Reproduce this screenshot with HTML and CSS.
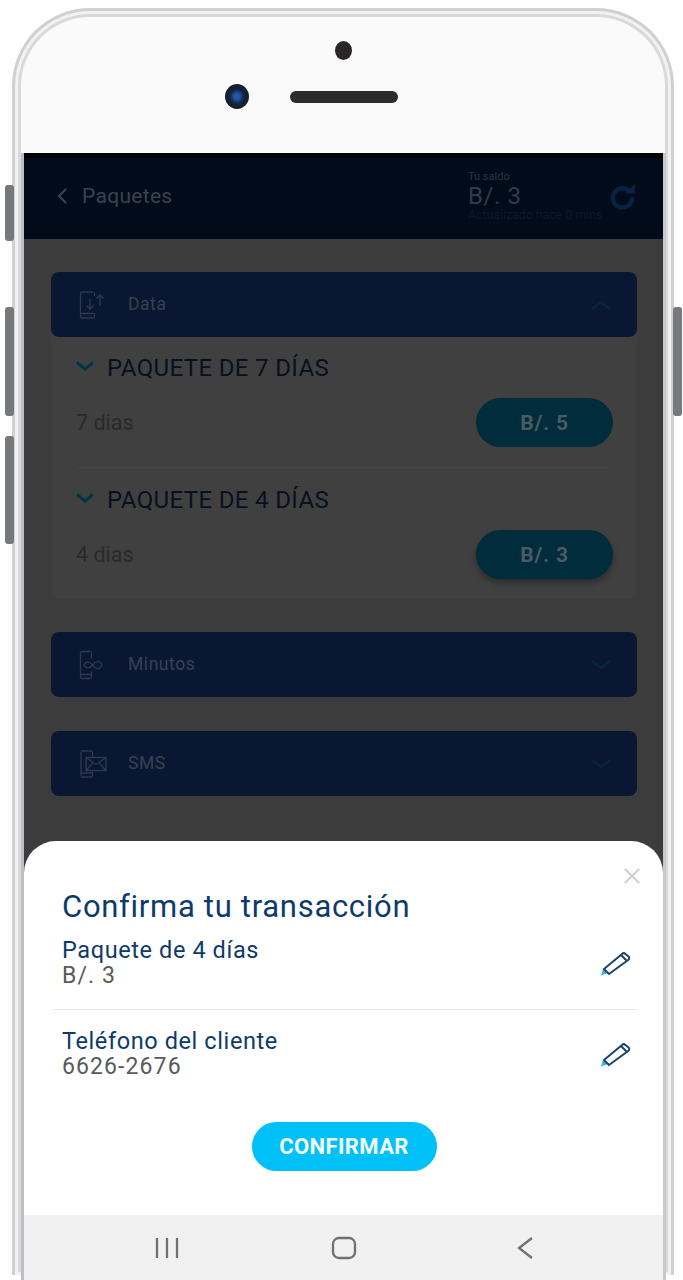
FILE: index.html
```html
<!DOCTYPE html>
<html lang="es">
<head>
<meta charset="utf-8">
<title>Paquetes</title>
<link rel="stylesheet" href="styles.css">
</head>
<body>
<div class="phone">
  <span class="side side-a"></span>
  <span class="side side-b"></span>
  <span class="side side-c"></span>
  <span class="side side-d"></span>
  <div class="frame">
    <div class="bezel">
      <span class="sensor"></span>
      <div class="bezel-row">
        <span class="lens"></span>
        <span class="speaker"></span>
      </div>
    </div>
    <div class="screen">
      <header class="topbar">
        <div class="back">
          <svg class="back-icon" viewBox="0 0 14 20"><path d="M11 3 4 10l7 7"/></svg>
          <span class="back-label">Paquetes</span>
        </div>
        <div class="balance">
          <div class="balance-cap">Tu saldo</div>
          <div class="balance-num">B/. 3</div>
          <div class="balance-note">Actualizado hace 0 mins</div>
        </div>
        <svg class="refresh" viewBox="0 0 30 30"><path d="M23 10.500A10 10 0 1 0 25 16"/><path class="fill" d="M17 12h11V2z"/></svg>
      </header>
      <main class="content">
        <section class="acc-open">
          <div class="acc-head">
            <svg class="acc-icon" viewBox="0 0 30 30"><path d="M14 2H3a1.500 1.500 0 0 0-1.500 1.500v23A1.500 1.500 0 0 0 3 28h11a1.500 1.500 0 0 0 1.500-1.500V24M1.500 23.500h14M15.500 6V2.800M11 9v10M7.500 15.500 11 19l3.500-3.500M21 16V5M17.500 8.500 21 5l3.500 3.500"/></svg>
            <span class="acc-label">Data</span>
            <svg class="acc-chev" viewBox="0 0 22 12"><path d="M2 10 11 3l9 7"/></svg>
          </div>
          <div class="acc-body">
            <div class="pack pack-first">
              <h2 class="pack-title"><svg class="pack-chev" viewBox="0 0 18 10"><path d="m1 1.500 8 6.500 8-6.500"/></svg>PAQUETE DE 7 DÍAS</h2>
              <div class="pack-row"><span class="pack-days">7 dias</span><span class="price">B/. 5</span></div>
            </div>
            <div class="pack pack-second">
              <h2 class="pack-title"><svg class="pack-chev" viewBox="0 0 18 10"><path d="m1 1.500 8 6.500 8-6.500"/></svg>PAQUETE DE 4 DÍAS</h2>
              <div class="pack-row"><span class="pack-days">4 dias</span><span class="price price-shadow">B/. 3</span></div>
            </div>
          </div>
        </section>
        <div class="acc-head acc-closed">
          <svg class="acc-icon" viewBox="0 0 30 30"><path d="M11 1.500H3A1.500 1.500 0 0 0 1.500 3v24A1.500 1.500 0 0 0 3 28.500h8A1.500 1.500 0 0 0 12.500 27v-6M12.500 9V3A1.500 1.500 0 0 0 11 1.500M1.500 24.500h11M5 15a4 3.500 0 0 1 7-1.500l3 3a4 3.500 0 1 0 0-3l-3 3A4 3.500 0 0 1 5 15z"/></svg>
          <span class="acc-label">Minutos</span>
          <svg class="acc-chev" viewBox="0 0 22 12"><path d="m2 2 9 7 9-7"/></svg>
        </div>
        <div class="acc-head acc-closed">
          <svg class="acc-icon" viewBox="0 0 30 30"><path d="M12 2H3.500A1.500 1.500 0 0 0 2 3.500v23A1.500 1.500 0 0 0 3.500 28H12a1.500 1.500 0 0 0 1.500-1.500V22M13.500 8V3.500A1.500 1.500 0 0 0 12 2M2 24h11.500M7 8.500h20v13H7zM7 8.500l10 7 10-7M7 21.500l7-8M27 21.500l-7-8"/></svg>
          <span class="acc-label">SMS</span>
          <svg class="acc-chev" viewBox="0 0 22 12"><path d="m2 2 9 7 9-7"/></svg>
        </div>
      </main>
      <section class="sheet">
        <svg class="close" viewBox="0 0 18 18"><path d="m2 2 14 14M16 2 2 16"/></svg>
        <h1 class="sheet-title">Confirma tu transacción</h1>
        <div class="line line-first">
          <div>
            <div class="line-label">Paquete de 4 días</div>
            <div class="line-value">B/. 3</div>
          </div>
          <svg class="pencil" viewBox="0 0 32 28"><path class="tip" d="M1 26.500 3 20l5 4z"/><path d="m4 20 18-15c1-1 2.500-1 3.500 0l3 2.500c1 1 1 2.300 0 3.200L9 25zM21 6l6 6"/></svg>
        </div>
        <div class="line line-second">
          <div>
            <div class="line-label">Teléfono del cliente</div>
            <div class="line-value">6626-2676</div>
          </div>
          <svg class="pencil" viewBox="0 0 32 28"><path class="tip" d="M1 26.500 3 20l5 4z"/><path d="m4 20 18-15c1-1 2.500-1 3.500 0l3 2.500c1 1 1 2.300 0 3.200L9 25zM21 6l6 6"/></svg>
        </div>
        <div class="confirm-wrap"><button class="confirm">CONFIRMAR</button></div>
      </section>
      <nav class="navbar">
        <svg class="nav-icon" viewBox="0 0 26 26"><path d="M3 3v20M13 3v20M23 3v20"/></svg>
        <svg class="nav-icon" viewBox="0 0 26 26"><rect x="2" y="3" width="22" height="20" rx="6"/></svg>
        <svg class="nav-icon" viewBox="0 0 26 26"><path d="M24 3 11 13l13 10"/></svg>
      </nav>
    </div>
  </div>
</div>
</body>
</html>
```
FILE: styles.css
```css
* { box-sizing: border-box; }
html, body { margin: 0; padding: 0; background: #fff; }
body { width: 683px; height: 1280px; overflow: hidden; font-family: Roboto, "Noto Sans", sans-serif; }

.phone { position: relative; width: 683px; height: 1280px; padding: 8px 9px 0 12px; }
.frame {
  height: 1267px;
  border: 3px solid #d0d0d0;
  border-bottom: 0;
  border-radius: 78px 78px 0 0;
  background: #fafafa;
  box-shadow: inset 0 0 0 3px #f2f2f2, inset 0 0 0 6px #d9d9d9;
  padding: 0 6px 0 9px;
}
.side { position: absolute; width: 9px; background: #77787c; border-radius: 3px; }
.side-a { left: 5px; top: 185px; height: 56px; }
.side-b { left: 5px; top: 307px; height: 109px; }
.side-c { left: 5px; top: 436px; height: 108px; }
.side-d { left: 673px; top: 307px; height: 109px; }

.bezel { height: 142px; display: flex; flex-direction: column; align-items: center; padding: 30px 0 0 0; }
.sensor { width: 17px; height: 19px; margin-left: -3px; border-radius: 50%; background: #2a2626; }
.bezel-row { display: flex; align-items: center; gap: 41px; margin-top: 24px; margin-left: -67px; }
.lens { width: 24px; height: 25px; border-radius: 50%; background: radial-gradient(circle at 50% 50%, #2457a8 0 14%, #12233f 42%, #181c24 72%, #4a5668 100%); display: block; }
.speaker { width: 108px; height: 12px; border-radius: 6px; background: #2c2c2e; }

.screen {
  width: 639px;
  background: #3c3c3c;
  height: 1127px;
  display: flex;
  flex-direction: column;
  box-shadow: -3px 0 0 #bcc0c4, 3px 0 0 #c8c8c8;
}
.topbar {
  height: 86px;
  flex: none;
  background: #010b1a;
  border-top: 5px solid #000;
  display: flex;
  align-items: center;
  padding: 0 20px 5px 31px;
  color: #3a424e;
}
.back { display: flex; align-items: center; gap: 13px; width: 413px; }
.back-icon { width: 14px; height: 20px; fill: none; stroke: #3a424e; stroke-width: 2.200; }
.back-label { font-size: 21px; letter-spacing: .3px; }
.balance { width: 142px; margin-top: -1px; }
.balance-cap { font-size: 11px; line-height: 14px; color: #2c333f; }
.balance-num { font-size: 24px; line-height: 24px; color: #343b47; letter-spacing: .6px; }
.balance-note { font-size: 12.300px; line-height: 14px; color: #101825; }
.refresh { width: 29px; height: 29px; margin-left: -2px; fill: none; stroke: #062345; stroke-width: 4.500; }
.refresh .fill { fill: #062345; stroke: none; }

.content { height: 602px; flex: none; padding: 33px 26px 0 27px; }
.acc-head {
  height: 65px;
  border-radius: 8px;
  background: #0a1733;
  display: flex;
  align-items: center;
  padding: 0 25px 0 28px;
}
.acc-icon { width: 30px; height: 30px; fill: none; stroke: #2d384e; stroke-width: 1.300; }
.acc-label { flex: 1; margin: -1px 0 0 19px; font-size: 17.500px; color: #3a4050; letter-spacing: .55px; }
.acc-chev { width: 22px; height: 12px; fill: none; stroke: #08263c; stroke-width: 2.500; }
.acc-open { border-radius: 8px; background: #404040; margin-bottom: 33px; height: 327px; }
.acc-closed { margin-bottom: 34px; }
.acc-body { padding: 0 24px 0 25px; }
.pack { padding-top: 17px; }
.pack-second { padding-top: 18px; }
.pack-first { height: 131px; border-bottom: 1px solid #454545; }
.pack-title { margin: 0; display: flex; align-items: center; font-size: 24px; line-height: 28px; font-weight: 400; color: #08101f; letter-spacing: .35px; }
.pack-chev { width: 18px; height: 10px; margin-right: 13px; margin-top: -4px; fill: none; stroke: #003644; stroke-width: 3; }
.pack-row { display: flex; align-items: center; justify-content: space-between; margin-top: 16px; }
.pack-days { font-size: 21.500px; color: #282a2c; }
.price { width: 137px; height: 49px; border-radius: 25px; background: #002c3b; color: #4c5a62; font-size: 21px; font-weight: 700; letter-spacing: .8px; display: flex; align-items: center; justify-content: center; }
.price-shadow { box-shadow: 0 4px 6px rgba(0,0,0,.3); }

.sheet {
  position: relative;
  height: 374px;
  flex: none;
  background: #fff;
  border-radius: 32px 32px 0 0;
  padding: 47px 26px 0 38px;
}
.close { position: absolute; right: 22px; top: 26px; width: 18px; height: 18px; fill: none; stroke: #cfcfcf; stroke-width: 2; }
.sheet-title { margin: 0; font-size: 31px; line-height: 38px; font-weight: 400; color: #0d3a6b; letter-spacing: .7px; }
.line { display: flex; justify-content: space-between; align-items: center; margin-left: -10px; padding-left: 10px; }
.line-first { padding-top: 12px; padding-bottom: 21px; border-bottom: 1px solid #e6e6e6; }
.line-second { padding-top: 19px; padding-bottom: 19px; }
.line-label { font-size: 23.500px; line-height: 25px; color: #0d3a6b; letter-spacing: .6px; }
.line-value { font-size: 23px; line-height: 25px; color: #5a5a5a; letter-spacing: 1.100px; }
.pencil { width: 32px; height: 28px; margin-right: 5px; fill: none; stroke: #1c4468; stroke-width: 2; }
.pencil .tip { fill: #3cb4dc; stroke: none; }
.confirm-wrap { display: flex; justify-content: center; padding-right: 11px; margin-top: 24px; }
.confirm { width: 185px; height: 49px; border: 0; border-radius: 25px; background: #00c1f7; color: #f4fbff; font: 700 22px Roboto, sans-serif; letter-spacing: .4px; }

.navbar { height: 65px; flex: none; background: #f1f1f1; display: grid; grid-template-columns: 177px 177px 26px; align-items: center; padding-left: 130px; }
.nav-icon { width: 26px; height: 26px; fill: none; stroke: #707070; stroke-width: 2.300; }
```
